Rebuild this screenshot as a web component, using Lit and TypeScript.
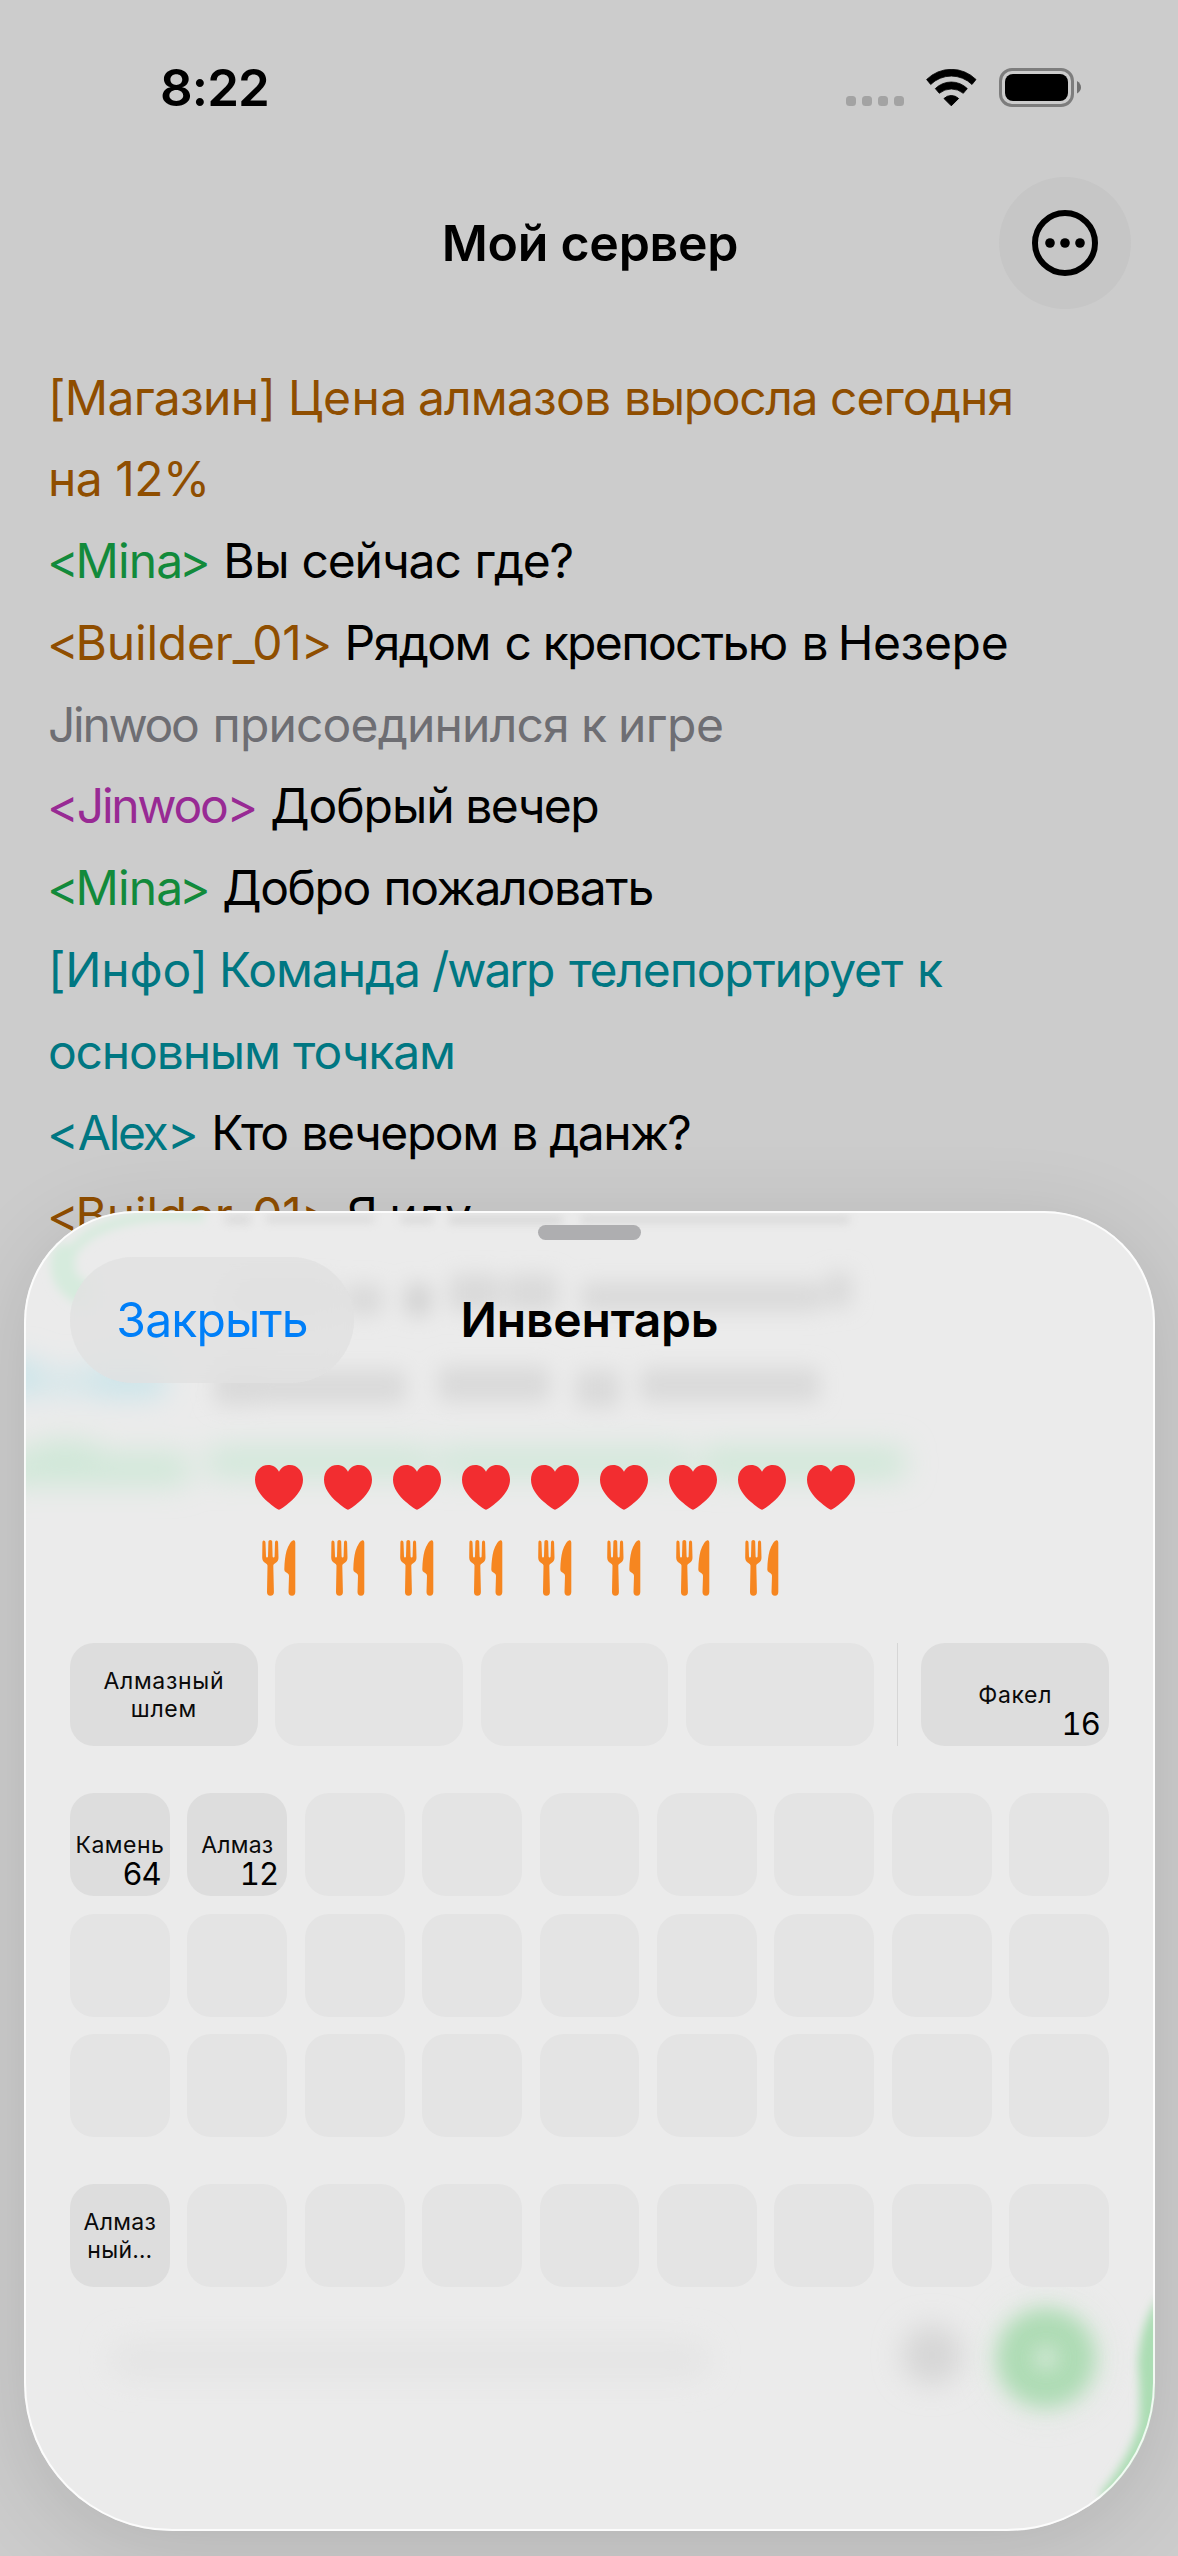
import { LitElement, html, css, nothing } from 'lit';
import { customElement, property } from 'lit/decorators.js';

type Tone = 'amber' | 'green' | 'teal' | 'purple' | 'gray';

/** A piece of a chat line: text, letter spacing, and the gap before it (0 joins it to the previous piece). */
type Run = [text: string, track: number, gap: number];

interface Line {
  tone: Tone;
  name?: keyof typeof NAMES;
  runs: Run[];
}

interface Item {
  label: string;
  count?: number;
  track?: number;
}

const SPACE = 13.5;

/** Bracketed nicknames: [spacing after "<", nickname spacing, shift before ">"]. */
const NAMES = {
  Mina: [-3.2, -0.87, -3.4],
  Builder_01: [-3.2, -0.2, -0.8],
  Jinwoo: [-1.9, -2.3, 0],
  Alex: [-0.9, -2.3, 0.4],
};

const CHAT: Line[] = [
  { tone: 'amber', runs: [['[Магазин]', -0.72, 0], ['Цена', 0.4, 12.8], ['алмазов', -0.83, 10.4], ['выросла', -1.36, 13.7], ['сегодня', -0.89, 12.9]] },
  { tone: 'amber', runs: [['на 12%', -0.53, 0]] },
  { tone: 'green', name: 'Mina', runs: [['Вы', -0.41, 12.6], ['сейчас', -1.09, 12.1], ['где?', -1.35, 13.7]] },
  { tone: 'amber', name: 'Builder_01', runs: [['Рядом', -1.54, 12], ['с', 0, 14.6], ['крепостью', -1.59, 10.6], ['в', 0, 15.1], ['Незере', -0.35, 8.9]] },
  { tone: 'gray', runs: [['Jinwoo', -2.3, 0], ['присоединился', -0.84, 15], ['к', 0, 12.2], ['игре', -0.48, 11]] },
  { tone: 'purple', name: 'Jinwoo', runs: [['Добрый', -1.05, 12], ['вечер', -1.57, 11.7]] },
  { tone: 'green', name: 'Mina', runs: [['Добро', -1.48, 11.6], ['пожаловать', -1.26, 13.7]] },
  { tone: 'teal', runs: [['[Инфо]', -0.16, 0], ['Команда', -1.1, 11.1], ['/warp', -2.09, 12.1], ['телепортирует', -1.13, 15.7], ['к', 0, 14.8]] },
  { tone: 'teal', runs: [['основным', -1.17, 0], ['точкам', -1.1, 13.2]] },
  { tone: 'teal', name: 'Alex', runs: [['Кто', -2.41, 12.6], ['вечером', -1.41, 14.6], ['в', 0, 13.4], ['данж?', -1.59, 10.9]] },
  { tone: 'amber', name: 'Builder_01', runs: [['Я', 0, 14.4], ['иду', -1.4, 11.5]] },
];

const ARMOR: (Item | null)[] = [{ label: 'Алмазный шлем', track: 0.68 }, null, null, null];
const OFFHAND: Item = { label: 'Факел', count: 16, track: 0.67 };
const BAG: (Item | null)[] = [
  { label: 'Камень', count: 64, track: 0.48 },
  { label: 'Алмаз', count: 12, track: 0.19 },
  ...Array(25).fill(null),
];
const HOTBAR: (Item | null)[] = [{ label: 'Алмаз\nный…', track: 0.3 }, ...Array(8).fill(null)];

@customElement('item-slot')
export class ItemSlot extends LitElement {
  @property({ attribute: false }) item: Item | null = null;

  static styles = css`
    :host { display: block; }
    .slot {
      position: relative;
      display: flex;
      align-items: center;
      justify-content: center;
      height: 103px;
      border-radius: 24px;
      background: #e4e4e4;
    }
    .filled { background: #dddddd; }
    .label {
      padding: 0 20px;
      margin: 0 -20px;
      width: min-content;
      font-size: 23px;
      line-height: 28px;
      text-align: center;
      white-space: pre-line;
      color: #0a0a0a;
    }
    .count {
      position: absolute;
      right: 9px;
      bottom: 3px;
      font-size: 31px;
      line-height: 38px;
      font-feature-settings: 'tnum';
      letter-spacing: -0.9px;
      color: #000;
    }
  `;

  render() {
    const it = this.item;
    return html`<div class="slot ${it ? 'filled' : ''}">
      ${it ? html`<span class="label" style="letter-spacing:${it.track ?? 0}px">${it.label}</span>` : nothing}
      ${it?.count ? html`<span class="count">${it.count}</span>` : nothing}
    </div>`;
  }
}

@customElement('app-root')
export class AppRoot extends LitElement {
  static styles = css`
    :host {
      display: block;
      font-family: Inter, 'Liberation Sans', sans-serif;
      color: #000;
    }
    .screen {
      position: relative;
      width: 1178px;
      height: 2556px;
      overflow: hidden;
      background: #cccccc;
    }
    .status {
      display: flex;
      align-items: flex-start;
      justify-content: space-between;
      height: 177px;
      padding: 0 97px 0 160px;
      box-sizing: border-box;
    }
    .time {
      margin-top: 57px;
      font-size: 51px;
      line-height: 62px;
      font-weight: 600;
      letter-spacing: -0.89px;
    }
    .signals { display: flex; align-items: flex-start; padding-top: 68px; }
    .cell { display: flex; gap: 6px; padding-top: 28px; }
    .cell i { width: 10px; height: 10px; border-radius: 3.5px; background: #a3a3a3; }
    .wifi { margin: 1px 0 0 22px; }
    .battery { margin-left: 22px; }
    .nav {
      display: grid;
      grid-template-columns: 132px 1fr 132px;
      align-items: center;
      height: 132px;
      padding: 0 47px;
    }
    .nav-title {
      grid-column: 2;
      padding-left: 2px;
      text-align: center;
      font-size: 50px;
      line-height: 60px;
      font-weight: 600;
      letter-spacing: -0.25px;
    }
    .more {
      display: flex;
      align-items: center;
      justify-content: center;
      width: 132px;
      height: 132px;
      border-radius: 50%;
      background: #c6c6c6;
    }
    .chat { padding: 47.6px 0 0 48px; font-size: 48px; line-height: 81.78px; }
    .line { white-space: pre; height: 81.78px; }
    .open { margin-left: -1px; }
    .said { color: #000; }
    .amber { color: #8f4e00; }
    .green { color: #128a3b; }
    .teal { color: #007782; }
    .purple { color: #982a94; }
    .gray { color: #6e6e73; }

    .sheet, .shade {
      position: absolute;
      left: 24px;
      top: 1211px;
      width: 1131px;
      height: 1320px;
      border-radius: 111px 111px 148px 148px;
    }
    .sheet { background: #ebebeb; overflow: hidden; }
    .shade { box-shadow: 0 16px 90px rgba(0, 0, 0, 0.12); }
    .haze { position: absolute; inset: 0; }
    .rim {
      position: absolute;
      inset: 0;
      border-radius: inherit;
      box-shadow: inset 0 0 0 2px rgba(255, 255, 255, 0.8), inset 0 0 3px rgba(255, 255, 255, 0.7);
    }
    .content { position: relative; display: flex; flex-direction: column; padding: 14px 46px 0 46px; }
    .grabber { align-self: center; width: 103px; height: 15px; border-radius: 7.5px; background: #aeaeb0; }
    .bar {
      display: grid;
      grid-template-columns: 284px 1fr 284px;
      align-items: center;
      height: 126px;
      margin-top: 17px;
      font-size: 48px;
      line-height: 58px;
    }
    .close {
      display: flex;
      align-items: center;
      justify-content: center;
      height: 126px;
      border-radius: 63px;
      background: rgba(224, 224, 224, 0.75);
      backdrop-filter: blur(16px);
      color: #007ff8;
      letter-spacing: -0.85px;
    }
    .sheet-title { text-align: center; font-weight: 600; letter-spacing: -0.2px; }
    .stat { display: flex; gap: 21px; padding-left: 185px; }
    .hearts { margin-top: 82px; height: 45px; }
    .food { margin-top: 29px; height: 58px; }
    .equipment {
      display: grid;
      grid-template-columns: repeat(4, 187.7px) 1fr 187.7px;
      column-gap: 17.6px;
      margin-top: 46px;
    }
    .divider { justify-self: center; width: 1px; height: 103px; margin: 0 -17px; background: #d6d6d6; }
    .grid { display: grid; grid-template-columns: repeat(9, 1fr); gap: 17.6px; margin-top: 47px; }
  `;

  private run([text, track, gap]: Run) {
    const style = `letter-spacing:${track}px;word-spacing:${gap ? gap - SPACE - track : 0}px`;
    return html`<span style=${style}>${gap ? ' ' + text : text}</span>`;
  }

  private line(l: Line) {
    const runs = l.runs.map((r) => this.run(r));
    if (!l.name) return html`<div class="line ${l.tone}">${runs}</div>`;
    const [open, track, shift] = NAMES[l.name];
    return html`<div class="line ${l.tone}"><span class="open" style="letter-spacing:${open}px">&lt;</span><span
        style="letter-spacing:${track}px">${l.name}</span><span
        style="margin-left:${shift}px">&gt;</span><span class="said">${runs}</span></div>`;
  }

  private heart() {
    return html`<svg width="48" height="45" viewBox="0 0 48 45">
      <path fill="#f22d30" d="M24 44.7C22.8 44.7 17 40.6 13 37C6 31 0 23.500 0 14.800C0 6.200 5.600 0 13.200 0C18 0 21.900 2.500 24 6.800C26.100 2.500 30 0 34.800 0C42.400 0 48 6.200 48 14.800C48 23.500 42 31 35 37C31 40.600 25.200 44.700 24 44.700Z"/>
    </svg>`;
  }

  private utensils() {
    return html`<svg width="48" height="58" viewBox="0 0 48 58">
      <g fill="#f68620">
        <path d="M8.500 1.500Q10.500 1.500 10.500 3.500L11 17.500Q11.100 18.600 12 18.600Q12.900 18.600 13 17.500L13.400 2.500Q13.500 1 15.300 1Q17.100 1 17.200 2.500L17.600 17.500Q17.700 18.600 18.600 18.600Q19.500 18.600 19.600 17.500L20 3.500Q20 1.500 21.600 1.500Q23 1.500 23.100 3.500L23.500 18.600Q23.600 22.500 20.500 24Q18.200 25 18.300 26.500L18.900 53Q19 56.700 15.400 56.700Q11.900 56.700 12 53L12.500 26.500Q12.500 25 10.300 24Q7.200 22.500 7.200 18.600L7.400 3.500Q7.500 1.500 8.500 1.500Z"/>
        <path d="M40.300 3.500Q40.300 1 38.300 1.200Q35 1.800 31.500 12Q29.500 19.500 29.300 30.500Q29.300 32.500 31 33.300L32.800 34.500Q34 35.200 34 37L33.500 53Q33.500 56.700 37 56.700Q40.300 56.700 40.300 53Z"/>
      </g>
    </svg>`;
  }

  /** Frosted shapes of the chat and composer showing through the sheet. */
  private haze() {
    return html`<svg class="haze" width="1131" height="1320" viewBox="24 1211 1131 1320" aria-hidden="true">
      <defs>
        <filter id="s" filterUnits="userSpaceOnUse" x="-50" y="1150" width="1300" height="1450"><feGaussianBlur stdDeviation="10"/></filter>
        <filter id="m" filterUnits="userSpaceOnUse" x="-50" y="1150" width="1300" height="1450"><feGaussianBlur stdDeviation="14"/></filter>
        <filter id="c" filterUnits="userSpaceOnUse" x="-50" y="1150" width="1300" height="1450"><feGaussianBlur stdDeviation="5"/></filter>
      </defs>
      <g filter="url(#s)" fill="#dadada">
        <rect x="225" y="1282" width="110" height="30" rx="8"/>
        <rect x="345" y="1284" width="38" height="32" rx="8"/>
        <rect x="405" y="1284" width="26" height="32" rx="8" fill="#d2d2d2"/>
        <rect x="449" y="1274" width="52" height="38" rx="8"/>
        <rect x="506" y="1274" width="52" height="38" rx="8"/>
        <rect x="580" y="1282" width="244" height="30" rx="8"/>
        <rect x="826" y="1272" width="26" height="36" rx="8"/>
        <rect x="214" y="1366" width="50" height="40" rx="8"/>
        <rect x="260" y="1370" width="146" height="34" rx="8"/>
        <rect x="438" y="1366" width="112" height="36" rx="8"/>
        <rect x="576" y="1370" width="44" height="38" rx="8"/>
        <rect x="640" y="1368" width="180" height="34" rx="8"/>
      </g>
      <g filter="url(#c)" fill="#bdbdbd" opacity="0.45">
        <rect x="225" y="1216" width="26" height="7" rx="3"/>
        <rect x="265" y="1216" width="110" height="6" rx="3"/>
        <rect x="400" y="1216" width="34" height="7" rx="3"/>
        <rect x="448" y="1216" width="115" height="8" rx="3"/>
        <rect x="580" y="1216" width="270" height="7" rx="3"/>
      </g>
      <g filter="url(#c)" fill="none" stroke="#d6ebdd" stroke-linecap="round">
        <path stroke-width="10" d="M200 1216Q130 1212 92 1233Q68 1248 60 1276"/>
        <path stroke-width="24" d="M64 1256Q58 1282 84 1294"/>
      </g>
      <g filter="url(#m)">
        <rect x="0" y="1358" width="40" height="38" rx="12" fill="#cbe5ea"/>
        <rect x="40" y="1368" width="56" height="28" rx="12" fill="#d6e7ea"/>
        <rect x="90" y="1364" width="76" height="34" rx="12" fill="#cce5ea"/>
        <rect x="30" y="1442" width="70" height="38" rx="12" fill="#cbe7d4"/>
        <rect x="0" y="1452" width="190" height="34" rx="12" fill="#d1e8d9"/>
        <rect x="206" y="1446" width="226" height="32" rx="12" fill="#d2e8da"/>
        <rect x="436" y="1446" width="256" height="32" rx="12" fill="#d3e8db"/>
        <rect x="700" y="1446" width="206" height="34" rx="12" fill="#d1e8d9"/>
        <rect x="110" y="2340" width="600" height="40" rx="20" fill="#e5e5e5"/>
      </g>
      <circle cx="932" cy="2355" r="30" fill="#d6d6d6" filter="url(#m)"/>
      <circle cx="1046" cy="2358" r="60" fill="#d9e8db" opacity="0.5" filter="url(#m)"/>
      <circle cx="1046" cy="2358" r="49" fill="#afdcb5" filter="url(#s)"/>
      <circle cx="1046" cy="2358" r="11" fill="#e4eee6" opacity="0.8" filter="url(#s)"/>
      <path filter="url(#c)" fill="#abddb3" d="M1160 2296Q1141 2320 1138 2363Q1141 2395 1139 2424Q1130 2458 1100 2494L1120 2520L1175 2440Z"/>
    </svg>`;
  }

  render() {
    return html`<div class="screen">
      <div class="status">
        <div class="time">8:22</div>
        <div class="signals">
          <div class="cell"><i></i><i></i><i></i><i></i></div>
          <svg class="wifi" width="51" height="38" viewBox="0 0 51 38">
            <path d="M0.600 10.500A35 35 0 0 1 50 10.500L46 15.500A29.500 29.500 0 0 0 4.700 15.500Z" stroke="#000" stroke-width=".8" stroke-linejoin="round"/>
            <path d="M9.300 19.600A22.700 22.700 0 0 1 41.300 19.600L37.300 24.300A18.800 18.800 0 0 0 13.300 24.300Z" stroke="#000" stroke-width=".8" stroke-linejoin="round"/>
            <path d="M18 29.500A10.500 10.500 0 0 1 32.600 29.500L25.300 36.800Z" stroke="#000" stroke-width="1" stroke-linejoin="round"/>
          </svg>
          <svg class="battery" width="82" height="39" viewBox="0 0 82 39">
            <rect x="1.500" y="1.500" width="72" height="36" rx="11.500" fill="none" stroke="#7d7d7d" stroke-width="3"/>
            <rect x="6" y="6" width="63" height="27" rx="8" fill="#000"/>
            <path d="M78 13Q82 15.500 82 19.500Q82 23 78 25.500Z" fill="#707070"/>
          </svg>
        </div>
      </div>

      <div class="nav">
        <div class="nav-title">Мой сервер</div>
        <div class="more">
          <svg width="66" height="66" viewBox="0 0 66 66">
            <circle cx="33" cy="33" r="30" fill="none" stroke="#000" stroke-width="6"/>
            <circle cx="18" cy="33" r="4.800"/><circle cx="33" cy="33" r="4.800"/><circle cx="48" cy="33" r="4.800"/>
          </svg>
        </div>
      </div>

      <div class="chat">${CHAT.map((l) => this.line(l))}</div>

      <div class="shade"></div>
      <div class="sheet">
        ${this.haze()}
        <div class="content">
          <div class="grabber"></div>
          <div class="bar">
            <div class="close">Закрыть</div>
            <div class="sheet-title">Инвентарь</div>
          </div>
          <div class="stat hearts">${Array.from({ length: 9 }, () => this.heart())}</div>
          <div class="stat food">${Array.from({ length: 8 }, () => this.utensils())}</div>
          <div class="equipment">
            ${ARMOR.map((i) => html`<item-slot .item=${i}></item-slot>`)}
            <div class="divider"></div>
            <item-slot .item=${OFFHAND}></item-slot>
          </div>
          <div class="grid">${BAG.map((i) => html`<item-slot .item=${i}></item-slot>`)}</div>
          <div class="grid">${HOTBAR.map((i) => html`<item-slot .item=${i}></item-slot>`)}</div>
        </div>
        <div class="rim"></div>
      </div>
    </div>`;
  }
}
